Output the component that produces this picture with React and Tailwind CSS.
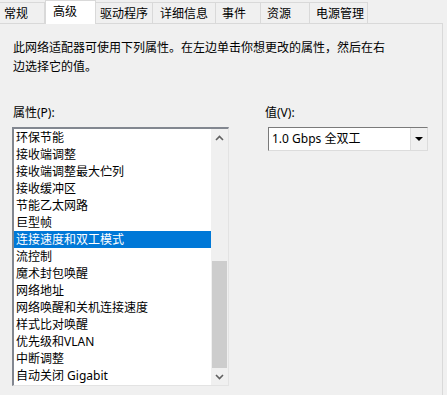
import React from 'react'

const tabs = [
  { label: '常规', w: 'w-[45px]', pl: 'pl-[4px]' },
  { label: '高级', w: 'w-[51px]', pl: 'pl-[7px]', active: true },
  { label: '驱动程序', w: 'w-[57px]', pl: 'pl-[4px]' },
  { label: '详细信息', w: 'w-[63px]', pl: 'pl-[7px]' },
  { label: '事件', w: 'w-[45px]', pl: 'pl-[6px]' },
  { label: '资源', w: 'w-[49px]', pl: 'pl-[6px]' },
  { label: '电源管理', w: 'w-[58px]', pl: 'pl-[6px]' },
]

const props = [
  '环保节能',
  '接收端调整',
  '接收端调整最大伫列',
  '接收缓冲区',
  '节能乙太网路',
  '巨型帧',
  '连接速度和双工模式',
  '流控制',
  '魔术封包唤醒',
  '网络地址',
  '网络唤醒和关机连接速度',
  '样式比对唤醒',
  '优先级和VLAN',
  '中断调整',
  '自动关闭 Gigabit',
]

function Chevron({ up }) {
  return (
    <svg width="9" height="6" viewBox="0 0 9 6">
      <path
        d={up ? 'M1 5 L4.5 1.5 L8 5' : 'M1 1 L4.5 4.5 L8 1'}
        fill="none"
        stroke="#606060"
        strokeWidth="1.6"
      />
    </svg>
  )
}

export default function App() {
  return (
    <div
      className="w-[447px] h-[395px] overflow-hidden bg-[#f0f0f0] text-[12px] text-black"
      style={{ fontFamily: '"Noto Sans", "Noto Sans CJK SC", sans-serif' }}
    >
      {/* Tabs */}
      <div className="relative z-10 flex h-[23px] items-start">
        {tabs.map((t) =>
          t.active ? (
            <div
              key={t.label}
              className={`${t.w} ${t.pl} h-[24px] pt-[2px] leading-[17px] bg-white border-l border-r border-t border-[#d9d9d9]`}
            >
              {t.label}
            </div>
          ) : (
            <div
              key={t.label}
              className={`${t.w} ${t.pl} mt-[2px] h-[21px] flex items-center leading-[17px] bg-[#f0f0f0] border-t border-r border-[#d9d9d9]`}
            >
              {t.label}
            </div>
          )
        )}
      </div>

      {/* Panel */}
      <div className="w-[443px] h-[372px] border-t border-r border-[#d9d9d9] pl-[13px] pt-[14px]">
        <p className="leading-[19px]">
          此网络适配器可使用下列属性。在左边单击你想更改的属性，然后在右
          <br />
          边选择它的值。
        </p>

        <div className="flex mt-[27px]">
          {/* Left column */}
          <div className="w-[217px] -ml-[1px]">
            <div className="pl-[1px] leading-[19px] h-[19px]">属性(P):</div>
            <div className="mt-[5px] w-[217px] h-[259px] border-t-2 border-l-2 border-[#828790] border-r border-b border-r-[#e3e3e3] border-b-[#e3e3e3] bg-white flex">
              <div className="flex-1 flex flex-col">
                {props.map((p, i) => (
                  <div
                    key={p}
                    className={`h-[17px] leading-[17px] pl-[2px] whitespace-nowrap ${
                      i === 6 ? 'bg-[#0078d7] text-white' : ''
                    }`}
                  >
                    {p}
                  </div>
                ))}
              </div>
              <div className="w-[17px] flex flex-col bg-[#f0f0f0]">
                <div className="h-[17px] flex items-center justify-center">
                  <Chevron up />
                </div>
                <div className="flex-1 flex flex-col justify-end items-center">
                  <div className="w-[15px] h-[107px] bg-[#cdcdcd]" />
                </div>
                <div className="h-[17px] flex items-center justify-center">
                  <Chevron />
                </div>
              </div>
            </div>
          </div>

          {/* Right column */}
          <div className="ml-[36px]">
            <div className="leading-[19px] h-[19px]">值(V):</div>
            <div className="mt-[5px] ml-[3px] w-[160px] h-[24px] border border-[#7a7a7a] border-r-[#dcdcdc] border-b-[#dcdcdc] bg-white flex">
              <div className="flex-1 pl-[3px] leading-[22px] whitespace-nowrap">1.0 Gbps 全双工</div>
              <div className="w-[17px] h-[22px] bg-[#f0f0f0] border-l border-[#dcdcdc] flex items-center justify-center">
                <svg width="8" height="4" viewBox="0 0 8 4">
                  <path d="M0 0 L8 0 L4 4 Z" fill="#000" />
                </svg>
              </div>
            </div>
          </div>
        </div>
      </div>
    </div>
  )
}
